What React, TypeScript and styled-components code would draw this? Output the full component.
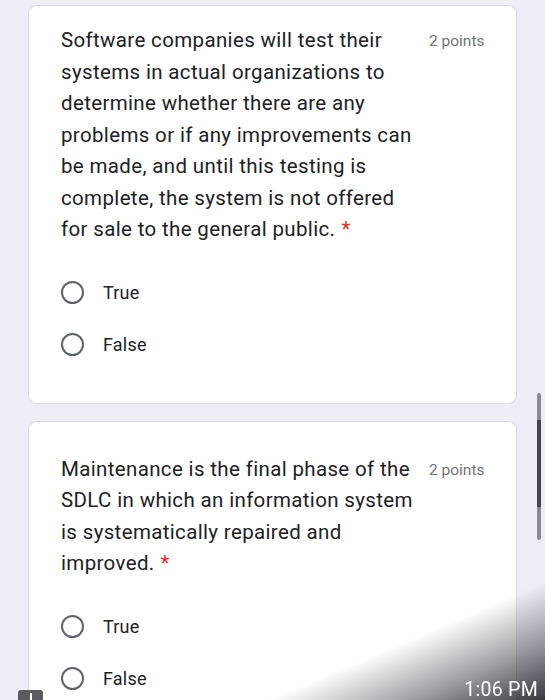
import styled, { createGlobalStyle } from "styled-components";

const GlobalStyle = createGlobalStyle`
    html, body {
        margin: 0;
        padding: 0;
        background: #efedf8;
        font-family: Roboto, "Liberation Sans", Arial, sans-serif;
        overflow: hidden;
    }
`;

const Page = styled.div`
    display: flex;
    flex-direction: column;
    gap: 17px;
    padding: 5px 28px 0 28px;
    height: 700px;
    box-sizing: border-box;
    overflow: hidden;
`;

const Card = styled.div<{ $top: number }>`
    background: #ffffff;
    border: 1px solid #dddbe6;
    border-radius: 9px;
    padding: ${(p) => p.$top}px 31px 32px 32px;
    flex-shrink: 0;
`;

const Header = styled.div`
    display: flex;
    align-items: flex-start;
    gap: 12px;
`;

const Title = styled.div`
    width: 356px;
    font-size: 20.5px;
    line-height: 31.5px;
    color: #202124;
    letter-spacing: 0.35px;
`;

const Required = styled.span`
    color: #d93025;
    padding-left: 6px;
`;

const Points = styled.div`
    font-size: 15.5px;
    line-height: 33px;
    color: #70757a;
    white-space: nowrap;
`;

const Options = styled.div`
    display: flex;
    flex-direction: column;
    margin-top: 21px;
`;

const Option = styled.label`
    display: flex;
    align-items: center;
    gap: 19px;
    height: 52px;
    font-size: 18px;
    letter-spacing: 0.2px;
    color: #202124;
`;

const Radio = styled.span`
    width: 19px;
    height: 19px;
    border: 2.5px solid #5f6368;
    border-radius: 50%;
    flex-shrink: 0;
`;

const Scrollbar = styled.div`
    position: fixed;
    right: 4px;
    top: 393px;
    width: 4px;
    height: 147px;
    border-radius: 2px;
    background: #8c8994;
    display: flex;
    flex-direction: column;
    padding-top: 27px;
    box-sizing: border-box;
`;

const Thumb = styled.div`
    height: 87px;
    background: #46444c;
`;

const Shade = styled.div`
    position: fixed;
    left: 0;
    right: 0;
    bottom: 0;
    height: 150px;
    background: linear-gradient(157deg, rgba(40, 40, 46, 0) 69%, rgba(45, 45, 50, 0.45) 85%, rgba(30, 30, 36, 0.88) 100%);
    display: flex;
    align-items: flex-end;
    justify-content: flex-end;
    pointer-events: none;
`;

const Clock = styled.div`
    color: #ffffff;
    font-size: 19.5px;
    line-height: 20px;
    padding-right: 7px;
    letter-spacing: 0.3px;
`;

const Tab = styled.div`
    position: fixed;
    left: 18px;
    bottom: -4px;
    width: 25px;
    height: 14px;
    border-radius: 3px 3px 0 0;
    background: #5a5a60;
    display: flex;
    justify-content: center;
    padding-top: 3px;
    box-sizing: border-box;
`;

const TabMark = styled.div`
    width: 2px;
    height: 11px;
    background: #ffffff;
`;

type Question = {
    text: string;
    top: number;
};

const questions: Question[] = [
    {
        text: "Software companies will test their systems in actual organizations to determine whether there are any problems or if any improvements can be made, and until this testing is complete, the system is not offered for sale to the general public.",
        top: 19,
    },
    {
        text: "Maintenance is the final phase of the SDLC in which an information system is systematically repaired and improved.",
        top: 32,
    },
];

function App() {
    return (
        <>
            <GlobalStyle />
            <Page>
                {questions.map((q, i) => (
                    <Card key={i} $top={q.top}>
                        <Header>
                            <Title>
                                {q.text}
                                <Required>*</Required>
                            </Title>
                            <Points>2 points</Points>
                        </Header>
                        <Options>
                            <Option>
                                <Radio />
                                True
                            </Option>
                            <Option>
                                <Radio />
                                False
                            </Option>
                        </Options>
                    </Card>
                ))}
            </Page>
            <Scrollbar>
                <Thumb />
            </Scrollbar>
            <Shade>
                <Clock>1:06 PM</Clock>
            </Shade>
            <Tab>
                <TabMark />
            </Tab>
        </>
    );
}

export default App;
